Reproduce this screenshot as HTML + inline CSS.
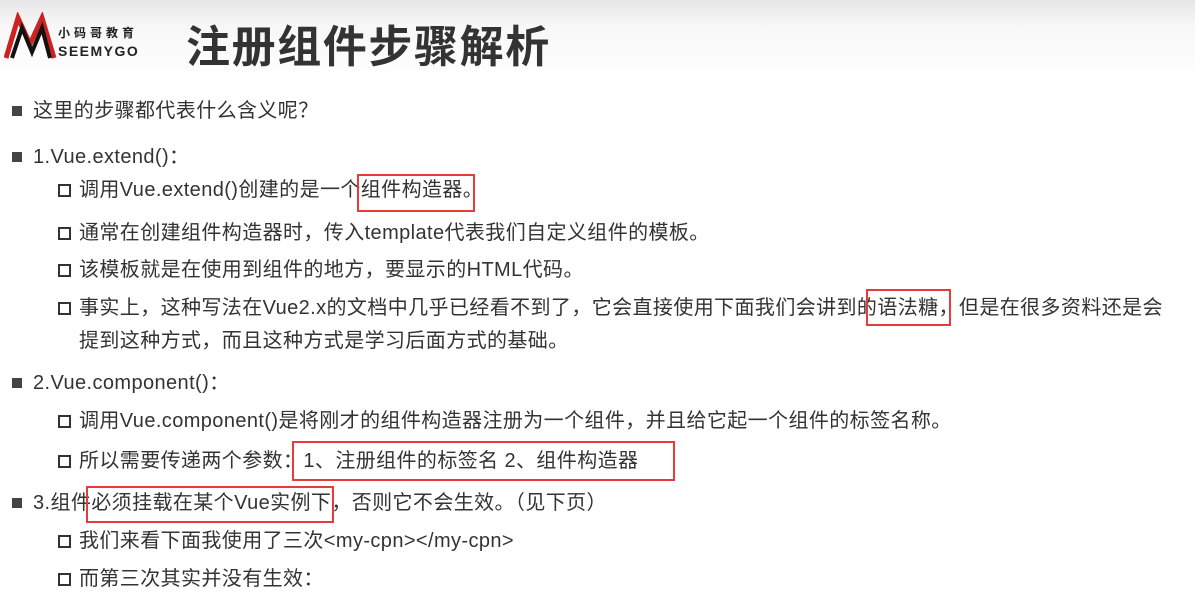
<!DOCTYPE html>
<html><head><meta charset="utf-8"><style>
body{margin:0;width:1195px;height:608px;overflow:hidden;background:#fff;font-family:"Liberation Sans","Noto Sans CJK SC",sans-serif;color:#333;position:relative}
.hdr{position:absolute;left:0;top:0;width:1195px;height:82px;background:linear-gradient(#e6e6e6,#f7f7f7 30%,#fff)}
.t{position:absolute;left:186px;top:11px;font-size:44px;font-weight:bold;color:#333;letter-spacing:1.6px;font-family:"Noto Sans CJK SC",sans-serif}
.l{position:absolute;white-space:nowrap;font-size:20px;letter-spacing:0.4px;line-height:24px}
.b1::before{content:"";position:absolute;left:-21px;top:7px;width:10px;height:10px;background:#444}
.b2::before{content:"";position:absolute;left:-21px;top:6px;width:9px;height:9px;border:2px solid #333}
.r{position:absolute;border:2px solid #e53b3b}
</style></head><body>
<div class="hdr"></div>
<svg style="position:absolute;left:4px;top:12px" width="60" height="50" viewBox="0 0 60 50">
<polyline points="2,46 14,6 26,32 38,6 50,46" fill="none" stroke="#c22" stroke-width="5"/>
<polyline points="8,46 18,16 28,40 38,16 46,46" fill="none" stroke="#111" stroke-width="4"/>
</svg>
<div style="position:absolute;left:58px;top:24px;font-size:12px;font-weight:bold;color:#222;letter-spacing:4px;font-family:'Noto Sans CJK SC',sans-serif">小码哥教育</div>
<div style="position:absolute;left:58px;top:43px;font-size:14px;font-weight:bold;color:#222;letter-spacing:1.5px">SEEMYGO</div>
<div class="t">注册组件步骤解析</div>
<div class="l b1" style="left:33px;top:99px">这里的步骤都代表什么含义呢？</div>
<div class="l b1" style="left:33px;top:145px">1.Vue.extend()：</div>
<div class="l b2" style="left:79px;top:178px">调用Vue.extend()创建的是一个组件构造器。</div>
<div class="l b2" style="left:79px;top:221px">通常在创建组件构造器时，传入template代表我们自定义组件的模板。</div>
<div class="l b2" style="left:79px;top:258px">该模板就是在使用到组件的地方，要显示的HTML代码。</div>
<div class="l b2" style="left:79px;top:296px">事实上，这种写法在Vue2.x的文档中几乎已经看不到了，它会直接使用下面我们会讲到的语法糖，但是在很多资料还是会</div>
<div class="l" style="left:79px;top:329px">提到这种方式，而且这种方式是学习后面方式的基础。</div>
<div class="l b1" style="left:33px;top:371px">2.Vue.component()：</div>
<div class="l b2" style="left:79px;top:409px">调用Vue.component()是将刚才的组件构造器注册为一个组件，并且给它起一个组件的标签名称。</div>
<div class="l b2" style="left:79px;top:449px">所以需要传递两个参数：1、注册组件的标签名 2、组件构造器</div>
<div class="l b1" style="left:33px;top:491px">3.组件必须挂载在某个Vue实例下，否则它不会生效。（见下页）</div>
<div class="l b2" style="left:79px;top:529px">我们来看下面我使用了三次&lt;my-cpn&gt;&lt;/my-cpn&gt;</div>
<div class="l b2" style="left:79px;top:567px">而第三次其实并没有生效：</div>
<div class="r" style="left:357px;top:174px;width:114px;height:34px"></div>
<div class="r" style="left:866px;top:289px;width:81px;height:33px"></div>
<div class="r" style="left:292px;top:441px;width:379px;height:36px"></div>
<div class="r" style="left:86px;top:486px;width:244px;height:33px"></div>
</body></html>
